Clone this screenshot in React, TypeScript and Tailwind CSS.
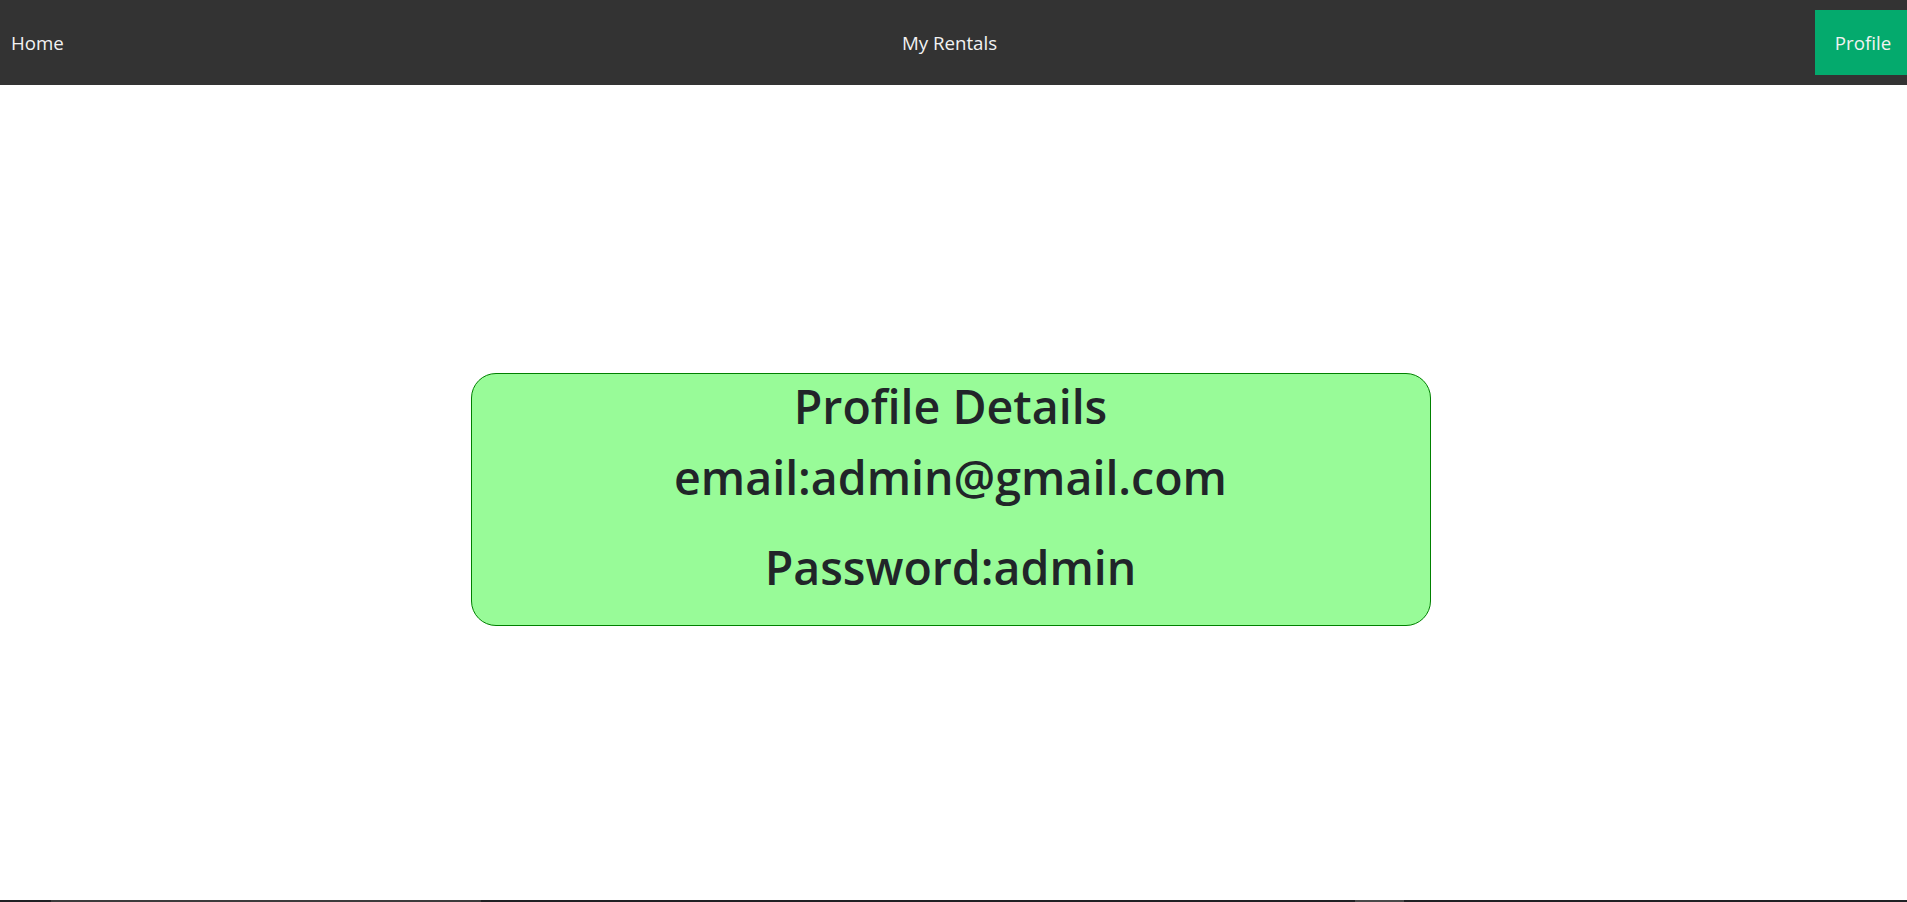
import React from "react";

export default function App() {
  return (
    <div className="h-screen flex flex-col bg-white font-['Open_Sans',sans-serif] overflow-hidden">
      <nav className="h-[85px] shrink-0 bg-[#333333] flex items-start relative text-[#f2f2f2] text-[18.7px]">
        <a className="pl-[11px] h-[85px] pt-[2px] flex items-center cursor-pointer">Home</a>
        <a className="absolute left-[calc(50%-4px)] -translate-x-1/2 top-0 h-[85px] pt-[2px] flex items-center cursor-pointer">
          My Rentals
        </a>
        <a className="ml-auto mt-[10px] h-[65px] w-[92px] pt-[2px] pl-[4px] bg-[#04AA6D] flex items-center justify-center cursor-pointer">
          Profile
        </a>
      </nav>
      <main className="flex-1 flex items-start justify-center">
        <div className="mt-[288px] mr-[6px] w-[960px] h-[253px] pt-[4px] bg-[#98fb98] border border-[#008000] rounded-[25px] flex flex-col items-center text-[#212529] font-semibold text-[46.5px] leading-[56px]">
          <div>Profile Details</div>
          <div className="mt-[15px]">email:admin@gmail.com</div>
          <div className="mt-[34px]">Password:admin</div>
        </div>
      </main>
      <div className="h-[2px] shrink-0 bg-[#202124] flex">
        <div className="ml-[51px] w-[430px] bg-[#3c3c3c]" />
        <div className="ml-[874px] w-[49px] bg-[#4a4a4a]" />
      </div>
    </div>
  );
}
